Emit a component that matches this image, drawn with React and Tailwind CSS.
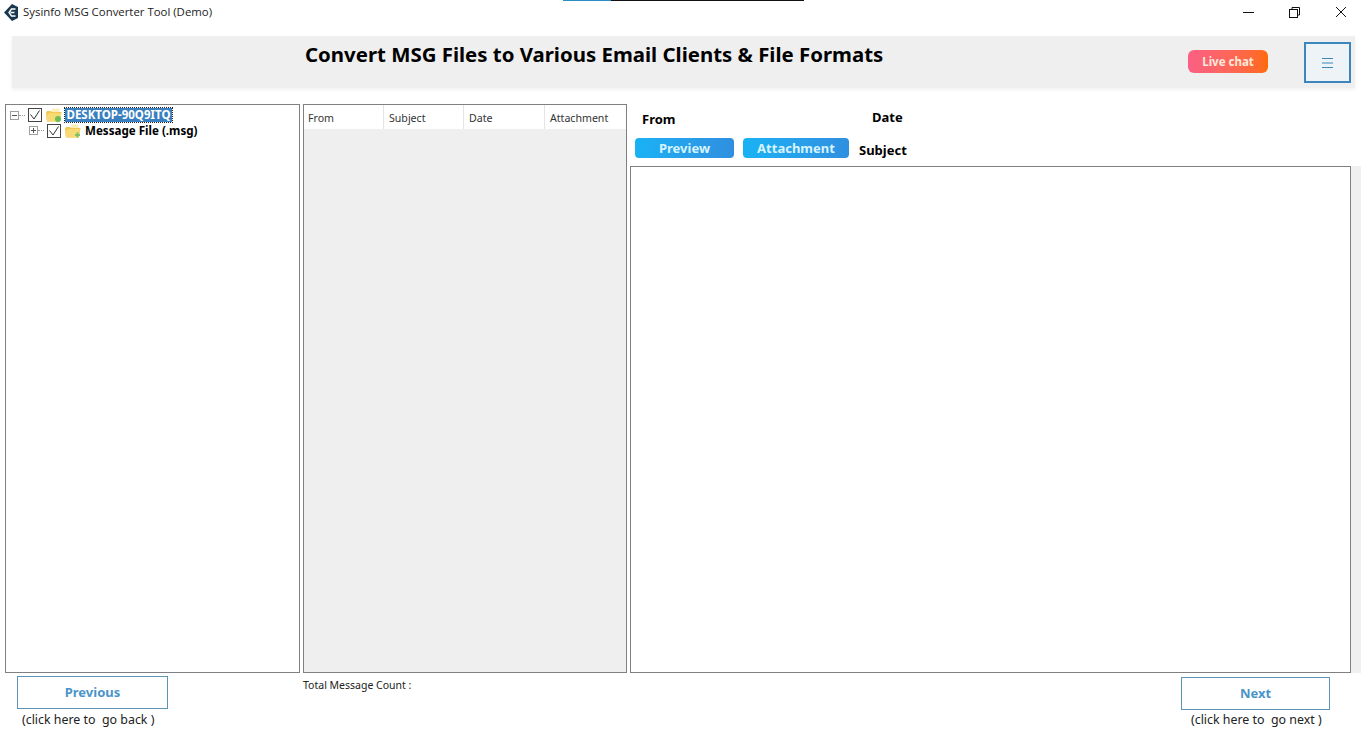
const tah = { fontFamily: '"Noto Sans", "DejaVu Sans", sans-serif' };

function Check() {
  return (
    <span className="w-[14px] h-[14px] border border-[#444] bg-white flex items-center justify-center shrink-0">
      <svg width="12" height="12" viewBox="0 0 12 12" fill="none" stroke="#333" strokeWidth="1"><path d="M1.5 5.5 L5 10 L10.5 1.5" /></svg>
    </span>
  );
}
function Folder({ plus }) {
  return (
    <svg width="16" height="14" viewBox="0 0 16 14" className="shrink-0">
      <path d="M0 5 L1 13.5 L14 13.5 L15.5 4 L8 4 L6.5 3 L1 3 Z" fill="#f2c94f" />
      <path d="M5 4 L6.5 0.5 L13 0.5 L14 4 Z" fill="#fbeeb8" />
      <path d="M0 7 L4 5 L15 5 L14 13.5 L1 13.5 Z" fill="#f7d976" />
      {plus ? <path d="M10 11 H15 M12.5 8.5 V13.5" stroke="#7cc36a" strokeWidth="2" /> : <circle cx="12" cy="11" r="3" fill="#6abf52" />}
    </svg>
  );
}
function Box({ minus }) {
  return (
    <span className="relative w-[9px] h-[9px] border border-[#a0a0a0] bg-white shrink-0">
      <span className="absolute left-[1px] top-[3px] w-[5px] h-px bg-[#555]" />
      {!minus && <span className="absolute left-[3px] top-[1px] w-px h-[5px] bg-[#555]" />}
    </span>
  );
}

export default function App() {
  return (
    <div className="w-[1366px] h-[736px] bg-white overflow-hidden flex flex-col text-black" style={tah}>
      {/* title bar */}
      <div className="h-[24px] flex items-center relative shrink-0">
        <svg width="14" height="17" viewBox="0 0 14 17" className="ml-[4px]">
          <path d="M8 0 L14 3 L14 14 L8 17 L0 8.5 Z" fill="#17384f" />
          <path d="M11.5 5 H7.5 L5 8.5 L7.5 12 H11.5 M6.5 8.5 H10.5" fill="none" stroke="#fff" strokeWidth="1.4" />
        </svg>
        <span className="ml-[5px] text-[11.4px] text-[#222]" style={{ fontFamily: '"Open Sans", sans-serif' }}>Sysinfo MSG Converter Tool (Demo)</span>
        <div className="absolute left-[563px] top-0 w-[241px] h-px flex">
          <div className="w-[48px] bg-[#2a8fc4]" />
          <div className="flex-1 bg-[#111]" />
        </div>
        <div className="ml-auto flex items-center pr-[19px] gap-[35px]">
          <svg width="11" height="11" viewBox="0 0 11 11"><path d="M0 5.5 H11" stroke="#111" /></svg>
          <svg width="11" height="11" viewBox="0 0 11 11" fill="none" stroke="#111"><rect x="0.5" y="2.5" width="8" height="8" /><path d="M3 2.5 V0.5 H10.5 V8 H8.5" /></svg>
          <svg width="12" height="12" viewBox="0 0 12 12"><path d="M1 1 L11 11 M11 1 L1 11" stroke="#111" /></svg>
        </div>
      </div>

      {/* header */}
      <div className="h-[52px] mt-[12px] ml-[12px] w-[1343px] bg-[#efefef] shadow-[0_2px_4px_rgba(0,0,0,0.06)] flex items-start relative shrink-0">
        <div className="absolute left-[293px] top-[5px] text-[20.4px] leading-[26px] font-bold whitespace-nowrap">Convert MSG Files to Various Email Clients &amp; File Formats</div>
        <div className="absolute left-[1176px] top-[14px] w-[80px] h-[23px] rounded-[6px] bg-gradient-to-r from-[#fb5f84] to-[#ff6a00] text-[#ffe9dc] text-[11.5px] font-bold flex items-center justify-center pt-[1px]">Live chat</div>
        <div className="absolute left-[1292px] top-[6px] w-[47px] h-[41px] border-2 border-[#3b87bd] bg-[#eef3f8] flex items-center justify-center">
          <svg width="11" height="10" viewBox="0 0 11 10" stroke="#3b87bd"><path d="M0 0.5 H11 M0 5 H11 M0 9.5 H11" /></svg>
        </div>
      </div>

      {/* panels */}
      <div className="flex mt-[16px] ml-[5px] h-[569px] gap-[3px] shrink-0">
        <div className="w-[295px] border border-[#808080] bg-white pt-[2px]">
          <div className="flex items-center h-[16px] pl-[4px]">
            <Box minus />
            <span className="w-[6px] border-t border-dotted border-[#999] mr-[3px]" />
            <span className="mr-[4px]"><Check /></span>
            <Folder />
            <span className="ml-[3px] bg-[#3a7fc0] text-white text-[11.5px] font-bold leading-[14px] w-[107px] text-center whitespace-nowrap outline-1 outline-dotted outline-[#222]">DESKTOP-90Q9ITQ</span>
          </div>
          <div className="flex items-center h-[15px] pl-[23px]">
            <Box />
            <span className="w-[6px] border-t border-dotted border-[#999] mr-[3px]" />
            <span className="mr-[4px]"><Check /></span>
            <Folder plus />
            <span className="ml-[4px] text-[11.6px] font-bold leading-[14px]">Message File (.msg)</span>
          </div>
        </div>

        <div className="w-[324px] border border-[#808080] bg-[#efefef] flex flex-col">
          <div className="h-[24px] flex bg-white text-[10.6px] text-[#333] items-center">
            <div className="w-[80px] h-full pl-[4px] pt-[6px] border-r border-[#e4e4e4]">From</div>
            <div className="w-[80px] h-full pl-[5px] pt-[6px] border-r border-[#e4e4e4]">Subject</div>
            <div className="w-[81px] h-full pl-[5px] pt-[6px] border-r border-[#e4e4e4]">Date</div>
            <div className="flex-1 h-full pl-[5px] pt-[6px]">Attachment</div>
          </div>
        </div>

        <div className="w-[721px] flex flex-col">
          <div className="h-[62px] relative text-[13px] font-bold">
            <span className="absolute left-[12px] top-[6px]">From</span>
            <span className="absolute left-[242px] top-[4px]">Date</span>
            <div className="absolute left-[5px] top-[34px] w-[99px] h-[20px] rounded-[4px] bg-gradient-to-r from-[#18b2f5] to-[#2f8fe0] text-[#d6f4ff] flex items-center justify-center pt-[1px]">Preview</div>
            <div className="absolute left-[113px] top-[34px] w-[106px] h-[20px] rounded-[4px] bg-gradient-to-r from-[#18b2f5] to-[#2f8fe0] text-[#d6f4ff] flex items-center justify-center pt-[1px]">Attachment</div>
            <span className="absolute left-[229px] top-[37px]">Subject</span>
          </div>
          <div className="flex-1 border border-[#808080] bg-white" />
        </div>
        <div className="w-[10px] mt-[62px] bg-[#f0f0f0] -ml-[3px]" />
      </div>

      {/* footer */}
      <div className="flex-1 relative">
        <div className="absolute left-[17px] top-[3px] w-[151px] h-[33px] border border-[#5b94b5] flex items-center justify-center text-[13px] font-bold text-[#4a94c8]">Previous</div>
        <div className="absolute left-[22px] top-[38px] text-[12.4px] text-[#222] whitespace-pre">(click here to  go back )</div>
        <div className="absolute left-[303px] top-[5px] text-[10.5px] text-[#222]">Total Message Count :</div>
        <div className="absolute left-[1181px] top-[4px] w-[149px] h-[33px] border border-[#5b94b5] flex items-center justify-center text-[13px] font-bold text-[#4a94c8]">Next</div>
        <div className="absolute left-[1191px] top-[38px] text-[12.4px] text-[#222] whitespace-pre">(click here to  go next )</div>
      </div>
    </div>
  );
}
